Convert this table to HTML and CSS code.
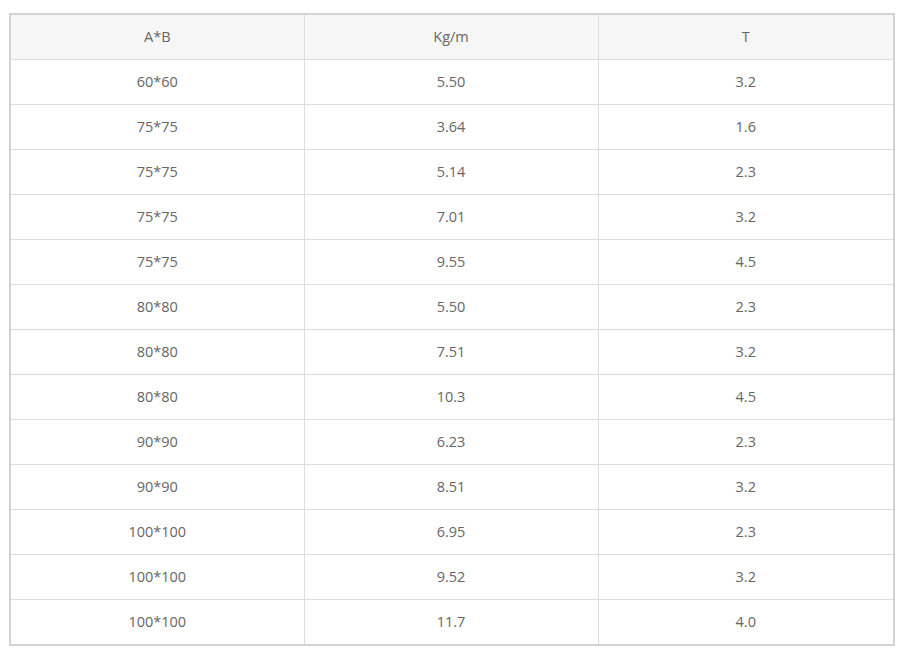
FILE: index.html
```html
<!DOCTYPE html>
<html>
<head>
<meta charset="utf-8">
<link rel="stylesheet" href="styles.css">
</head>
<body>
<table class="spec">
<colgroup><col class="c1"><col class="c2"><col class="c3"></colgroup>
<thead>
<tr><th>A*B</th><th>Kg/m</th><th>T</th></tr>
</thead>
<tbody>
<tr><td>60*60</td><td>5.50</td><td>3.2</td></tr>
<tr><td>75*75</td><td>3.64</td><td>1.6</td></tr>
<tr><td>75*75</td><td>5.14</td><td>2.3</td></tr>
<tr><td>75*75</td><td>7.01</td><td>3.2</td></tr>
<tr><td>75*75</td><td>9.55</td><td>4.5</td></tr>
<tr><td>80*80</td><td>5.50</td><td>2.3</td></tr>
<tr><td>80*80</td><td>7.51</td><td>3.2</td></tr>
<tr><td>80*80</td><td>10.3</td><td>4.5</td></tr>
<tr><td>90*90</td><td>6.23</td><td>2.3</td></tr>
<tr><td>90*90</td><td>8.51</td><td>3.2</td></tr>
<tr><td>100*100</td><td>6.95</td><td>2.3</td></tr>
<tr><td>100*100</td><td>9.52</td><td>3.2</td></tr>
<tr><td>100*100</td><td>11.7</td><td>4.0</td></tr>
</tbody>
</table>
</body>
</html>
```
FILE: styles.css
```css
html, body {
  margin: 0;
  padding: 0;
  background: #fff;
}
body {
  padding: 13px 8px 0 9px;
  font-family: "Open Sans", "Noto Sans", sans-serif;
}
.spec {
  width: 886px;
  border-collapse: collapse;
  table-layout: fixed;
  border: 2px solid #d3d3d3;
}
.spec .c1 { width: 294px; }
.spec .c2 { width: 294px; }
.spec th, .spec td {
  height: 42px;
  padding: 0 0 2px 0;
  border: 1px solid #dcdcdc;
  text-align: center;
  vertical-align: middle;
  font-size: 14.5px;
  font-weight: normal;
  color: #666;
}
.spec th {
  background: #f6f6f6;
}
```
